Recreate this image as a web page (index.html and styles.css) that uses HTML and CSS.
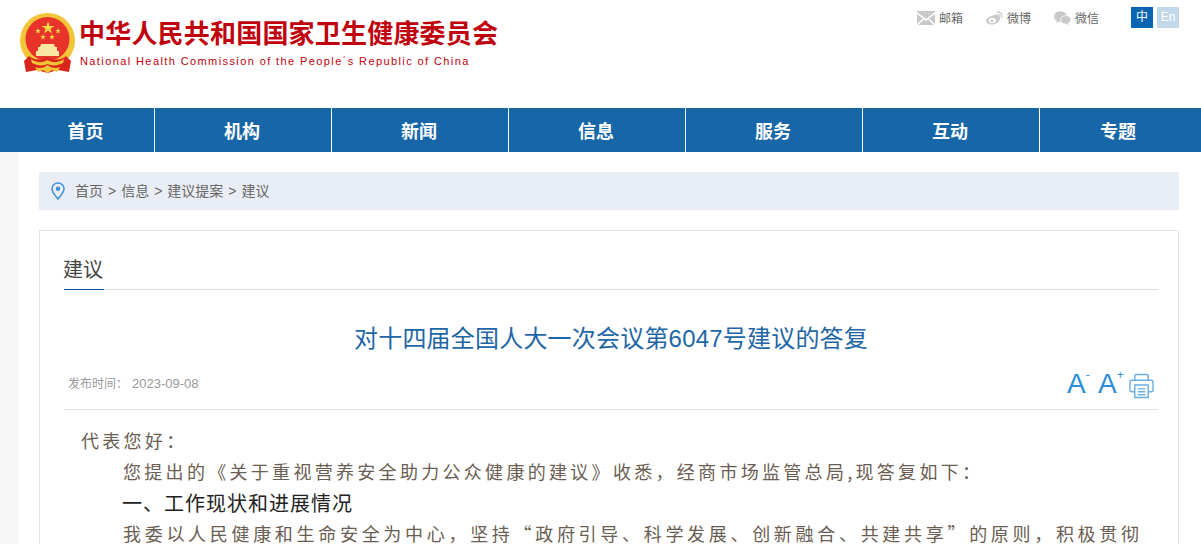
FILE: index.html
```html
<!DOCTYPE html>
<html lang="zh-CN">
<head>
    <meta charset="UTF-8">
    <title>对十四届全国人大一次会议第6047号建议的答复</title>
    <link rel="stylesheet" href="styles.css">
</head>
<body>
    <header class="top">
        <div class="logo">
            <svg class="emblem" width="55" height="60" viewBox="0 0 55 60">
                <defs>
                    <polygon id="star" points="0,-10 2.245,-3.09 9.51,-3.09 3.63,1.18 5.88,8.09 0,3.82 -5.88,8.09 -3.63,1.18 -9.51,-3.09 -2.245,-3.09" fill="#f6d84a"/>
                </defs>
                <circle cx="27.500" cy="27.500" r="27.500" fill="#f2c438"/>
                <circle cx="27.500" cy="26" r="22" fill="#e8332a"/>
                <use href="#star" transform="translate(28 15) scale(0.68)"/>
                <use href="#star" transform="translate(18 18) scale(0.3)"/>
                <use href="#star" transform="translate(38 18) scale(0.3)"/>
                <use href="#star" transform="translate(23 24) scale(0.3)"/>
                <use href="#star" transform="translate(32 24) scale(0.3)"/>
                <path d="M21 31 H34 L35 34 H37 V38 H39 V43 H16 V38 H18 V34 H20 Z" fill="#f9e6a0"/>
                <path d="M9 43 C13 47 21 48 27.500 44 C34 48 42 47 46 43 L51 48 L49 59 L38 57 L27.500 60 L17 57 L6 59 L4 48 Z" fill="#d9261c"/>
                <path d="M11 46 C17 50 23 50 27.500 47 C32 50 38 50 44 46 L43 50 C37 53 32 53 27.500 51 C23 53 18 53 12 50 Z" fill="#f2c438"/>
                <path d="M15 54 C20 56 24 55 27.500 52 C31 55 35 56 40 54 L37 59 L32 57 L27.500 60 L23 57 L18 59 Z" fill="#f2c438"/>
            </svg>
            <div class="logo-text">
                <div class="logo-cn">中华人民共和国国家卫生健康委员会</div>
                <div class="logo-en">National Health Commission of the People´s Republic of China</div>
            </div>
        </div>
        <div class="top-links">
            <a class="top-link mail-link">
                <svg width="18" height="14" viewBox="0 0 18 14">
                    <path d="M0 1 L9 8 L18 1 V0 H0 Z" fill="#c9c9c9"/>
                    <path d="M0 3 V13 L6 7.500 Z M18 3 V13 L12 7.500 Z M1 14 H17 L11 8.500 L9 10 L7 8.500 Z" fill="#c9c9c9"/>
                </svg>
                邮箱
            </a>
            <a class="top-link">
                <svg width="17" height="14" viewBox="0 0 17 14">
                    <path d="M7 4.500 C9.500 3 12 3.200 12 5.200 C14 5.500 14.500 7 13.800 8.500 C12.800 11.500 9 13.500 5.500 13.500 C2.500 13.500 0 12 0 9.800 C0 8 2.500 5.500 7 4.500 Z" fill="#c9c9c9"/>
                    <ellipse cx="6.300" cy="9.500" rx="3.600" ry="2.700" fill="#fff"/>
                    <circle cx="6" cy="9.700" r="1.500" fill="#c9c9c9"/>
                    <path d="M11 1.200 C14 0.500 16.700 3 15.800 6.300 M11.500 3.500 C13 3.200 14.200 4.300 13.800 5.800" fill="none" stroke="#c9c9c9" stroke-width="1.200" stroke-linecap="round"/>
                </svg>
                微博
            </a>
            <a class="top-link">
                <svg width="17" height="14" viewBox="0 0 17 14">
                    <ellipse cx="6.500" cy="5.500" rx="6.500" ry="5.300" fill="#c9c9c9"/>
                    <path d="M3 9 L2.500 12 L6 10 Z" fill="#c9c9c9"/>
                    <ellipse cx="11.800" cy="8.800" rx="5.200" ry="4.300" fill="#c9c9c9" stroke="#fff" stroke-width="0.800"/>
                    <path d="M14 12 L15 14 L11.500 12.500 Z" fill="#c9c9c9"/>
                </svg>
                微信
            </a>
            <div class="lang">
                <span class="lang-btn lang-on">中</span>
                <span class="lang-btn lang-off">En</span>
            </div>
        </div>
    </header>

    <nav class="nav">
        <a class="nav-item">首页</a>
        <a class="nav-item">机构</a>
        <a class="nav-item">新闻</a>
        <a class="nav-item">信息</a>
        <a class="nav-item">服务</a>
        <a class="nav-item">互动</a>
        <a class="nav-item">专题</a>
    </nav>

    <main class="main">
        <div class="crumb">
            <svg width="14" height="18" viewBox="0 0 14 18">
                <path d="M7 1 C3.500 1 1 3.600 1 6.800 C1 10.500 4.500 14 7 17 C9.500 14 13 10.500 13 6.800 C13 3.600 10.500 1 7 1 Z" fill="none" stroke="#3d90d8" stroke-width="1.500"/>
                <circle cx="7" cy="6.800" r="2.200" fill="#3d90d8"/>
            </svg>
            <span class="crumb-text">首页 &gt; 信息 &gt; 建议提案 &gt; 建议</span>
        </div>

        <section class="card">
            <div class="tab-row"><span class="tab">建议</span></div>
            <h1 class="title">对十四届全国人大一次会议第6047号建议的答复</h1>
            <div class="meta">
                <span class="date">发布时间：<span class="date-num">2023-09-08</span></span>
                <div class="tools">
                    <span class="font-btn">A<sup class="font-sign">-</sup></span>
                    <span class="font-btn">A<sup class="font-sign">+</sup></span>
                    <svg class="print" width="25" height="26" viewBox="0 0 26 26" fill="none" stroke="#6cb0e2" stroke-width="1.500">
                        <path d="M6 7 V2.500 Q6 1 7.500 1 H18.500 Q20 1 20 2.500 V7"/>
                        <path d="M6 19 H3 Q1 19 1 17 V9 Q1 7 3 7 H23 Q25 7 25 9 V17 Q25 19 23 19 H20"/>
                        <path d="M6 12 H20 V25 H6 Z"/>
                        <path d="M9 16 H17 M9 19 H17 M9 22 H17"/>
                    </svg>
                </div>
            </div>
            <div class="content">
                <p class="line-first">代表您好：</p>
                <p class="para">您提出的《关于重视营养安全助力公众健康的建议》收悉，经商市场监管总局,现答复如下：</p>
                <p class="heading">一、工作现状和进展情况</p>
                <p class="para para-full">我委以人民健康和生命安全为中心，坚持“政府引导、科学发展、创新融合、共建共享”的原则，积极贯彻</p>
            </div>
        </section>
    </main>
</body>
</html>
```

FILE: styles.css
```css
* {
    box-sizing: border-box;
}
html, body {
    margin: 0;
    height: 544px;
    overflow: hidden;
}
body {
    font-family: "Liberation Sans", "Noto Sans CJK SC", sans-serif;
    background: #fff;
    color: #333;
}
.top {
    height: 108px;
    display: flex;
    justify-content: space-between;
    padding: 13px 22px 0 20px;
}
.logo {
    display: flex;
    align-items: flex-start;
    gap: 4px;
}
.logo-text {
    padding-top: 5px;
}
.logo-cn {
    font-size: 26px;
    line-height: 32px;
    font-weight: bold;
    letter-spacing: 0.2px;
    color: #c0000c;
}
.logo-en {
    font-size: 11px;
    line-height: 14px;
    margin-top: 4px;
    padding-left: 1px;
    letter-spacing: 1.4px;
    color: #c0000c;
}
.top-links {
    display: flex;
    align-items: center;
    height: 21px;
    margin-top: -6px;
    font-size: 12px;
    color: #666;
}
.top-link {
    display: flex;
    align-items: center;
    gap: 4px;
    margin-right: 23px;
}
.lang {
    display: flex;
    gap: 4px;
    margin-left: 9px;
}
.lang-btn {
    width: 22px;
    height: 21px;
    line-height: 21px;
    text-align: center;
    color: #fff;
}
.lang-on {
    background: #0a66b2;
}
.lang-off {
    background: #c3d9ea;
}
.nav {
    height: 44px;
    background: #1766a8;
    display: flex;
    padding-left: 19px;
}
.nav-item {
    width: 177px;
    padding-right: 2px;
    border-right: 1px solid #fff;
    text-align: center;
    color: #fff;
    font-size: 18px;
    font-weight: bold;
    line-height: 48px;
}
.nav-item:first-child {
    width: 136px;
}
.nav-item:last-child {
    width: 158px;
    border-right: none;
}
.main {
    margin-left: 19px;
    padding: 20px 22px 0 20px;
    background: #fff;
    box-shadow: -19px 0 0 #f6f6f6;
    height: 392px;
}
.crumb {
    height: 38px;
    background: #e9edf5;
    display: flex;
    align-items: center;
    padding-left: 12px;
    font-size: 14px;
    word-spacing: 1.1px;
    color: #666;
}
.crumb-text {
    margin-left: 10px;
    line-height: 36px;
}
.card {
    margin-top: 20px;
    border: 1px solid #e5e5e5;
    padding: 0 20px 0 24px;
    height: 340px;
}
.tab-row {
    height: 59px;
    border-bottom: 1px solid #ddd;
    padding-top: 24px;
}
.tab {
    display: inline-block;
    height: 35px;
    width: 40px;
    font-size: 20px;
    line-height: 30px;
    text-indent: -1px;
    color: #444;
    border-bottom: 1px solid #0a4f9e;
}
.title {
    margin: 30px 0 0;
    font-size: 24px;
    line-height: 38px;
    font-weight: normal;
    letter-spacing: 0.2px;
    text-align: center;
    color: #1f66a6;
}
.meta {
    display: flex;
    justify-content: space-between;
    height: 45px;
    margin-top: 7px;
    padding: 0 4px;
    border-bottom: 1px solid #e0e0e0;
}
.date {
    font-size: 12px;
    line-height: 20px;
    margin-top: 9px;
    color: #999;
}
.date-num {
    font-size: 13px;
    margin-left: 4px;
}
.tools {
    display: flex;
    align-items: flex-start;
    margin-top: 4px;
    gap: 4px;
}
.font-btn {
    font-size: 28px;
    line-height: 30px;
    color: #2a8fd8;
    width: 27px;
}
.font-sign {
    font-size: 12px;
    line-height: 0;
    vertical-align: 14px;
}
.print {
    margin-top: 4px;
}
.content {
    font-family: "Noto Sans CJK SC", sans-serif;
    padding-top: 15px;
    font-size: 18px;
    line-height: 31px;
    letter-spacing: 3.3px;
    color: #6a5d52;
}
.content p {
    margin: 0;
}
.line-first {
    padding-left: 17px;
}
.para {
    padding-left: 59px;
    white-space: nowrap;
}
.para-full {
    padding-right: 17px;
    text-align: justify;
    text-align-last: justify;
    letter-spacing: 2px;
    white-space: normal;
}
.heading {
    padding-left: 58px;
    font-size: 20px;
    letter-spacing: 1px;
    color: #222;
}
```
